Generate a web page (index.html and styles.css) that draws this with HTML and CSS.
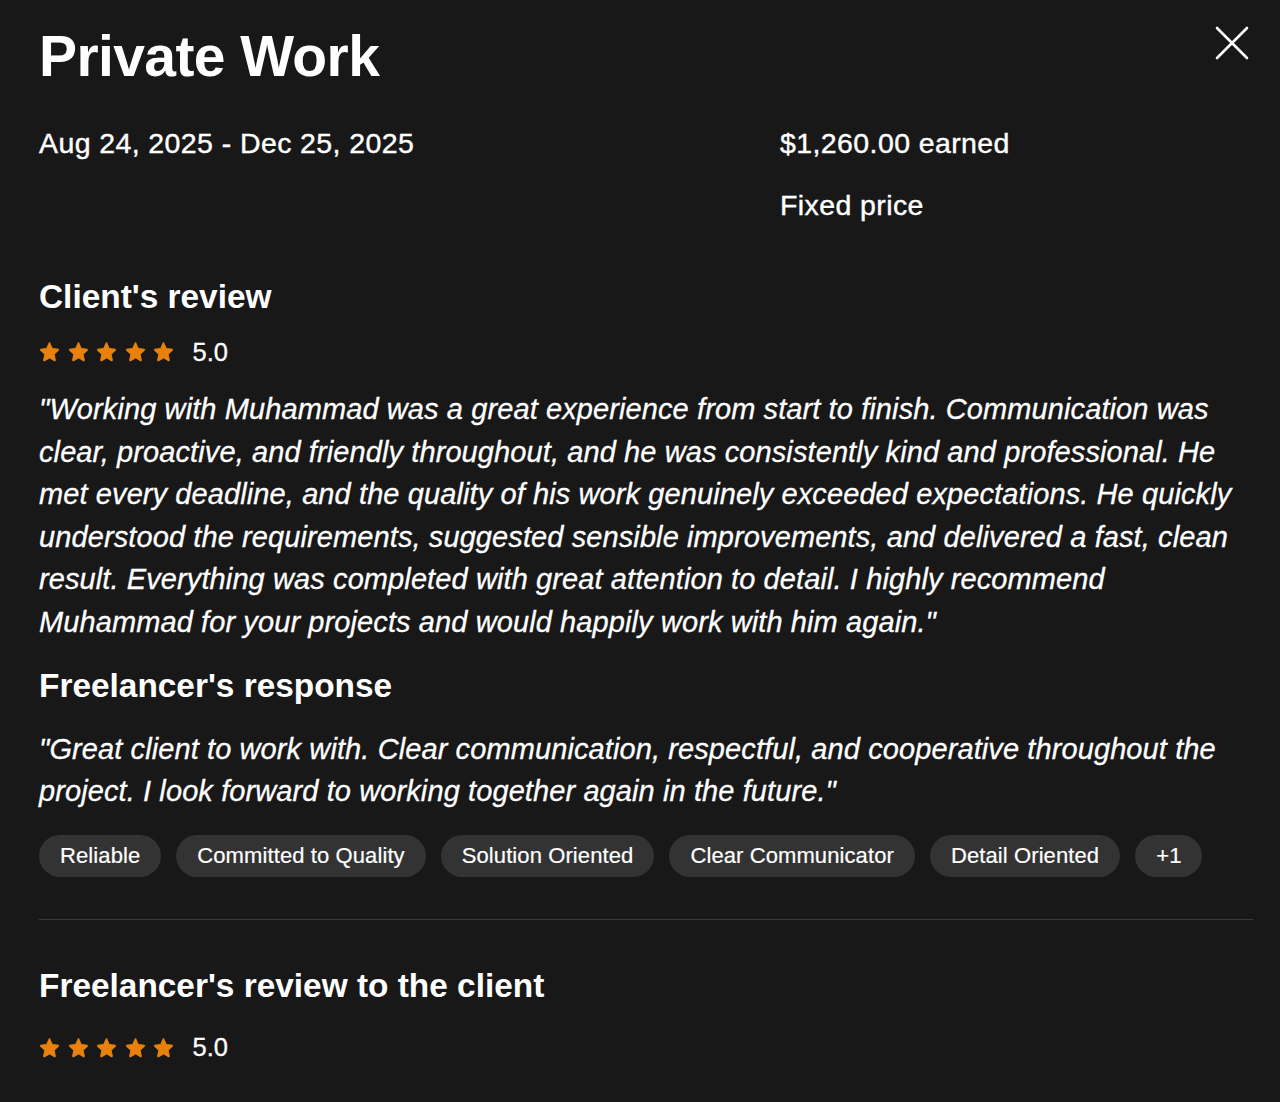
FILE: index.html
```html
<!DOCTYPE html>
<html lang="en">
<head>
<meta charset="utf-8">
<title>Private Work</title>
<link rel="stylesheet" href="styles.css">
</head>
<body>
<svg width="0" height="0" class="defs">
  <defs>
    <symbol id="star" viewBox="0 0 24 24">
      <path d="M12 2.2l2.9 6.1 6.6.8c.6.1.8.8.4 1.2l-4.9 4.6 1.3 6.6c.1.6-.5 1-1 .7L12 18.9l-5.9 3.3c-.5.3-1.1-.1-1-.7l1.3-6.6-4.9-4.6c-.4-.4-.2-1.1.4-1.2l6.6-.8L11.2 2.2c.3-.5 1-.5 1.3 0z" fill="#e8820c" stroke="#e8820c" stroke-width="1" stroke-linejoin="round"/>
    </symbol>
  </defs>
</svg>
<main class="panel">
  <button class="close" aria-label="Close">
    <svg viewBox="0 0 34 34" width="34" height="34"><path d="M2 2L32 32M32 2L2 32" stroke="#fff" stroke-width="2.6" stroke-linecap="round"/></svg>
  </button>
  <h1 class="title">Private Work</h1>
  <div class="meta">
    <div class="meta-left">
      <p class="meta-line">Aug 24, 2025 - Dec 25, 2025</p>
    </div>
    <div class="meta-right">
      <p class="meta-line">$1,260.00 earned</p>
      <p class="meta-line second">Fixed price</p>
    </div>
  </div>

  <h2 class="section-title first">Client's review</h2>
  <div class="rating">
    <span class="stars">
      <svg class="star"><use href="#star"/></svg>
      <svg class="star"><use href="#star"/></svg>
      <svg class="star"><use href="#star"/></svg>
      <svg class="star"><use href="#star"/></svg>
      <svg class="star"><use href="#star"/></svg>
    </span>
    <span class="score">5.0</span>
  </div>
  <p class="quote">"Working with Muhammad was a great experience from start to finish. Communication was clear, proactive, and friendly throughout, and he was consistently kind and professional. He met every deadline, and the quality of his work genuinely exceeded expectations. He quickly understood the requirements, suggested sensible improvements, and delivered a fast, clean result. Everything was completed with great attention to detail. I highly recommend Muhammad for your projects and would happily work with him again."</p>

  <h2 class="section-title">Freelancer's response</h2>
  <p class="quote response">"Great client to work with. Clear communication, respectful, and cooperative throughout the project. I look forward to working together again in the future."</p>

  <ul class="tags">
    <li class="tag">Reliable</li>
    <li class="tag">Committed to Quality</li>
    <li class="tag">Solution Oriented</li>
    <li class="tag">Clear Communicator</li>
    <li class="tag">Detail Oriented</li>
    <li class="tag">+1</li>
  </ul>

  <hr class="divider">

  <h2 class="section-title last">Freelancer's review to the client</h2>
  <div class="rating bottom">
    <span class="stars">
      <svg class="star"><use href="#star"/></svg>
      <svg class="star"><use href="#star"/></svg>
      <svg class="star"><use href="#star"/></svg>
      <svg class="star"><use href="#star"/></svg>
      <svg class="star"><use href="#star"/></svg>
    </span>
    <span class="score">5.0</span>
  </div>
</main>
</body>
</html>
```

FILE: styles.css
```css
* { box-sizing: border-box; }
html, body {
  margin: 0;
  padding: 0;
  background: #181818;
  color: #ffffff;
  font-family: "Liberation Sans", Arial, Helvetica, sans-serif;
}
.defs { position: absolute; width: 0; height: 0; overflow: hidden; }
.panel {
  position: relative;
  padding: 20px 27px 40px 39px;
  min-height: 1102px;
}
.close {
  position: absolute;
  top: 26px;
  right: 31px;
  background: none;
  border: 0;
  padding: 0;
  width: 34px;
  height: 34px;
  cursor: pointer;
}
.close svg { display: block; }
.title {
  margin: 0;
  font-size: 57px;
  line-height: 72px;
  font-weight: 700;
  letter-spacing: -0.6px;
}
.meta {
  display: grid;
  grid-template-columns: 741px 1fr;
  margin-top: 33px;
}
.meta-line {
  margin: 0;
  font-size: 28.5px;
  line-height: 36px;
  letter-spacing: 0.4px;
  -webkit-text-stroke: 0.4px #fff;
}
.meta-line.second { margin-top: 26px; }
.section-title {
  margin: 0;
  font-size: 33.4px;
  line-height: 40px;
  font-weight: 700;
}
.section-title.first { margin-top: 54px; }
.section-title.last { margin-top: 46px; }
.rating {
  display: flex;
  align-items: center;
  gap: 18px;
  margin-top: 20px;
  height: 30px;
}
.rating.bottom { margin-top: 27px; }
.stars { display: flex; gap: 7px; }
.star { width: 21.5px; height: 21.5px; display: block; }
.score {
  font-size: 25.5px;
  -webkit-text-stroke: 0.3px #fff;
}
.quote {
  margin: 21px 0 0;
  font-style: italic;
  font-size: 29px;
  line-height: 42.6px;
  letter-spacing: 0.1px;
  -webkit-text-stroke: 0.3px #fff;
  max-width: 1205px;
}
.quote + .section-title { margin-top: 22px; }
.quote.response { margin-top: 22px; }
.tags {
  list-style: none;
  margin: 22px 0 0;
  padding: 0;
  display: flex;
  flex-wrap: wrap;
  gap: 15px;
}
.tag {
  background: #333333;
  border-radius: 22px;
  height: 42px;
  padding: 0 21px;
  display: flex;
  align-items: center;
  font-size: 22px;
  letter-spacing: 0.1px;
  -webkit-text-stroke: 0.2px #fff;
}
.divider {
  border: 0;
  border-top: 1.5px solid #3a3a3a;
  margin: 42px 0 0;
}
```
